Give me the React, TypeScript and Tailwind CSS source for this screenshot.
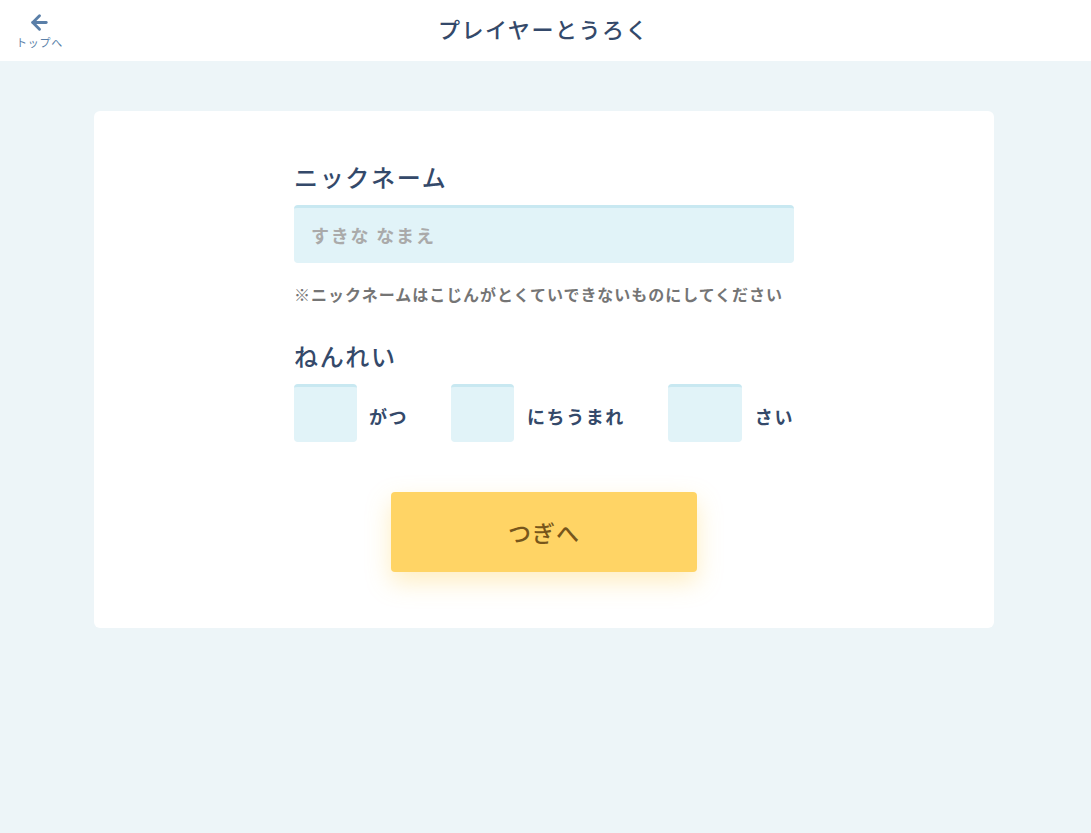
import { ArrowLeft } from "lucide-react";

const font = { fontFamily: '"Noto Sans CJK JP", "Noto Sans", sans-serif' };

function SmallBox({ width }: { width: string }) {
  return (
    <div
      className={`${width} h-[58px] rounded-[4px] bg-[#e1f3f8] border-t-[3px] border-[#c8e8f1]`}
    />
  );
}

export default function App() {
  return (
    <div className="min-h-[833px] bg-[#edf5f8] flex flex-col" style={font}>
      {/* Header */}
      <header className="h-[61px] bg-white relative flex items-center justify-center shrink-0">
        <button className="absolute left-[16px] top-[11px] flex flex-col items-center text-[#5a7fa8]">
          <ArrowLeft className="w-[23px] h-[23px]" strokeWidth={3} />
          <span className="text-[11px] leading-none mt-[3px] tracking-[0.07em] whitespace-nowrap">トップへ</span>
        </button>
        <h1 className="text-[22px] font-medium text-[#34496a] tracking-[0.07em] -mt-[5px] -ml-[4px]">
          プレイヤーとうろく
        </h1>
      </header>

      <main className="pt-[50px] pl-[94px] flex">
        <div className="w-[900px] bg-white rounded-[6px] pt-[48px] pb-[56px] flex justify-center">
          <div className="w-[500px] flex flex-col">
            <label className="text-[24px] font-medium text-[#34496a] leading-[36px] tracking-[0.07em]">
              ニックネーム
            </label>
            <div className="mt-[10px] h-[58px] rounded-[4px] bg-[#e1f3f8] border-t-[3px] border-[#c8e8f1] flex items-center px-[17px]">
              <span className="text-[18px] font-bold text-[#aaaaaa] tracking-[0.1em]">
                すきな なまえ
              </span>
            </div>
            <p className="mt-[19px] text-[16px] font-bold text-[#757575] leading-[24px] tracking-[0.06em] whitespace-nowrap">
              ※ニックネームはこじんがとくていできないものにしてください
            </p>

            <label className="mt-[32px] text-[24px] font-medium text-[#34496a] leading-[36px] tracking-[0.07em]">
              ねんれい
            </label>
            <div className="mt-[10px] flex items-center">
              <SmallBox width="w-[63px]" />
              <span className="ml-[12px] w-[82px] text-[18px] font-bold text-[#34496a] pt-[6px] tracking-[0.09em]">がつ</span>
              <SmallBox width="w-[63px]" />
              <span className="ml-[13px] w-[141px] text-[18px] font-bold text-[#34496a] pt-[6px] tracking-[0.09em]">
                にちうまれ
              </span>
              <SmallBox width="w-[74px]" />
              <span className="ml-[13px] text-[18px] font-bold text-[#34496a] pt-[6px] tracking-[0.09em]">さい</span>
            </div>

            <div className="mt-[50px] flex justify-center">
              <button className="w-[306px] h-[80px] rounded-[4px] bg-[#ffd465] text-[#77561b] text-[23px] font-medium tracking-[0.04em] shadow-[0_10px_24px_rgba(255,205,80,0.35)]">
                つぎへ
              </button>
            </div>
          </div>
        </div>
      </main>
    </div>
  );
}
